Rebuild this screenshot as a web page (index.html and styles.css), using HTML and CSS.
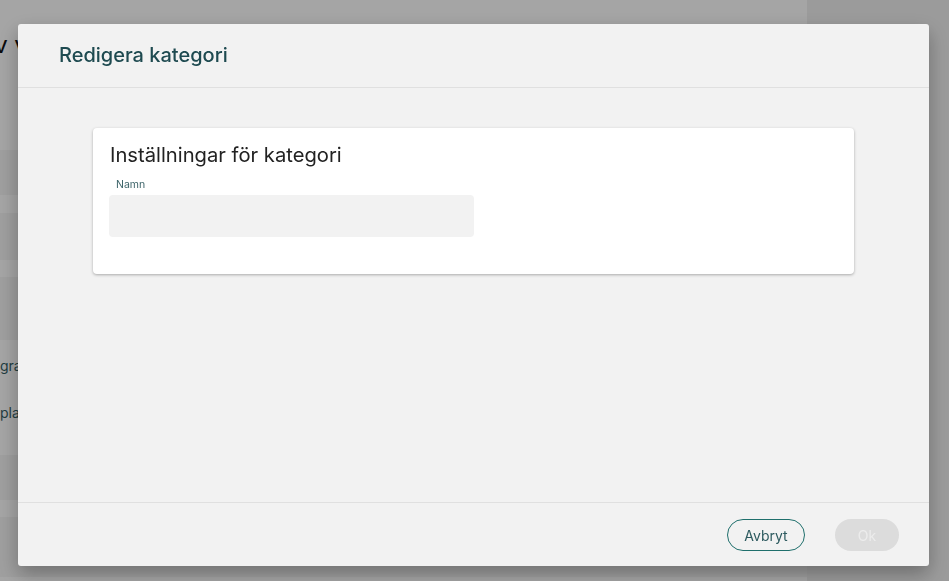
FILE: index.html
```html
<!DOCTYPE html>
<html lang="sv">
<head>
<meta charset="utf-8">
<link rel="stylesheet" href="styles.css">
</head>
<body>
<div class="page">
  <div class="panel">
    <div class="panel-head">av vyer</div>
    <div class="band b1"></div>
    <div class="band b2"></div>
    <div class="band b3"></div>
    <div class="panel-text">
      <div class="ptxt">grafik</div>
      <div class="ptxt">plats</div>
    </div>
    <div class="band b4"></div>
    <div class="band b5"></div>
  </div>
</div>
<div class="overlay"></div>
<div class="dialog">
  <div class="dialog-header">
    <h1 class="dialog-title">Redigera kategori</h1>
  </div>
  <div class="dialog-body">
    <div class="card">
      <h2 class="card-title">Inställningar för kategori</h2>
      <label class="field-label">Namn</label>
      <div class="field-input"></div>
    </div>
  </div>
  <div class="dialog-footer">
    <button class="btn btn-outline">Avbryt</button>
    <button class="btn btn-disabled">Ok</button>
  </div>
</div>
</body>
</html>
```
FILE: styles.css
```css
* { box-sizing: border-box; }
html, body { margin: 0; padding: 0; }
body {
  width: 949px;
  height: 581px;
  overflow: hidden;
  font-family: Inter, "Noto Sans", sans-serif;
  background: #ececec;
}
.page { height: 581px; display: flex; }
.panel {
  width: 807px;
  height: 581px;
  background: #fbfbfb;
  display: flex;
  flex-direction: column;
}
.panel-head {
  height: 150px;
  padding: 30px 0 0 0;
  margin-left: -19px;
  font-size: 24px;
  color: #111;
  white-space: nowrap;
}
.band { background: #f1f1f1; flex: none; }
.b1 { height: 45px; margin-bottom: 18px; }
.b2 { height: 47px; margin-bottom: 17px; }
.b3 { height: 63px; }
.panel-text { height: 115px; padding-top: 16px; }
.ptxt { font-size: 14px; color: #355e63; height: 47px; line-height: 20px; }
.b4 { height: 45px; margin-bottom: 17px; }
.b5 { height: 60px; }

.overlay {
  position: fixed;
  inset: 0;
  background: rgba(0,0,0,0.34);
}
.dialog {
  position: fixed;
  left: 18px;
  top: 24px;
  width: 911px;
  height: 542px;
  background: #f2f2f2;
  border-radius: 3px;
  box-shadow: 0 8px 20px rgba(0,0,0,0.3);
  display: flex;
  flex-direction: column;
}
.dialog-header {
  height: 64px;
  border-bottom: 1px solid #e0e0e0;
  padding: 0 41px;
  display: flex;
  align-items: center;
}
.dialog-title {
  margin: 0;
  font-size: 20px;
  font-weight: 500;
  color: #1e4a50;
  padding-bottom: 1px;
}
.dialog-body {
  flex: 1;
  padding: 40px 75px 0 75px;
}
.card {
  background: #fff;
  border-radius: 4px;
  box-shadow: 0 1px 3px rgba(0,0,0,0.3);
  height: 146px;
  padding: 14px 16px 0 16px;
}
.card-title {
  margin: 0 0 0 1px;
  font-size: 20.2px;
  font-weight: 400;
  color: #222;
  line-height: 26px;
}
.field-label {
  display: block;
  font-size: 10.5px;
  color: #3d6469;
  margin: 10px 0 0 7px;
  line-height: 13px;
}
.field-input {
  margin-top: 4px;
  width: 365px;
  height: 42px;
  background: #f2f2f2;
  border-radius: 4px;
}
.dialog-footer {
  height: 64px;
  border-top: 1px solid #e0e0e0;
  display: flex;
  align-items: flex-start;
  justify-content: flex-end;
  padding: 16px 30px 0 0;
  gap: 30px;
}
.btn {
  font-family: Inter, "Noto Sans", sans-serif;
  font-size: 14px;
  height: 32px;
  border-radius: 16px;
  padding: 0;
}
.btn-outline {
  width: 78px;
  background: transparent;
  border: 1px solid #1f6f6c;
  color: #2d5a5f;
}
.btn-disabled {
  width: 64px;
  background: #dcdcdc;
  border: none;
  color: #ececec;
}
```
